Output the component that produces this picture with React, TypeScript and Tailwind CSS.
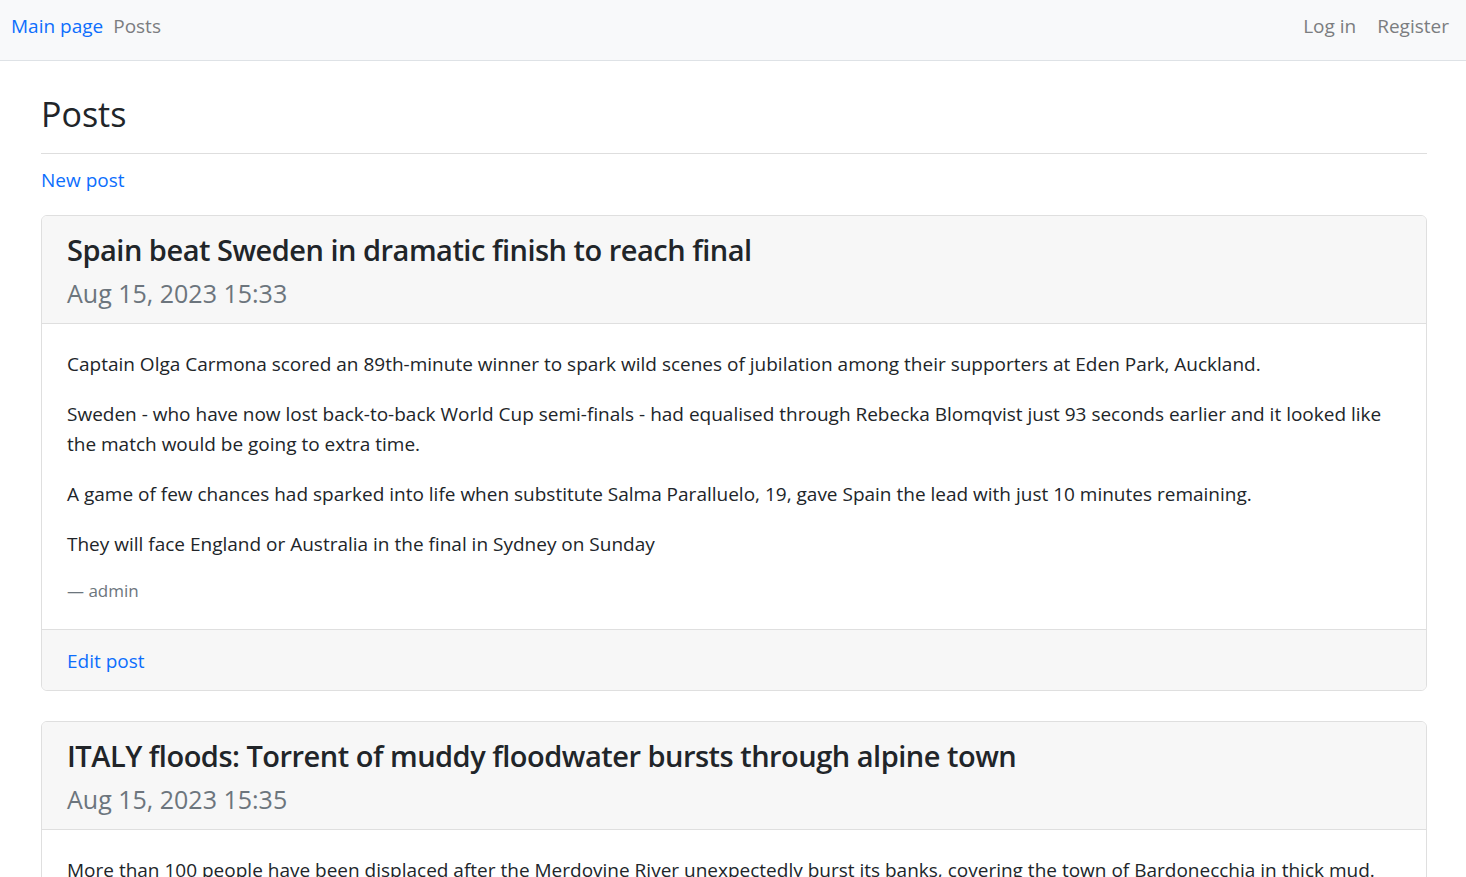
import React from 'react';

type Post = {
    title: string;
    date: string;
    paragraphs: string[];
    author: string;
};

const posts: Post[] = [
    {
        title: 'Spain beat Sweden in dramatic finish to reach final',
        date: 'Aug 15, 2023 15:33',
        paragraphs: [
            'Captain Olga Carmona scored an 89th-minute winner to spark wild scenes of jubilation among their supporters at Eden Park, Auckland.',
            'Sweden - who have now lost back-to-back World Cup semi-finals - had equalised through Rebecka Blomqvist just 93 seconds earlier and it looked like the match would be going to extra time.',
            'A game of few chances had sparked into life when substitute Salma Paralluelo, 19, gave Spain the lead with just 10 minutes remaining.',
            'They will face England or Australia in the final in Sydney on Sunday',
        ],
        author: 'admin',
    },
    {
        title: 'ITALY floods: Torrent of muddy floodwater bursts through alpine town',
        date: 'Aug 15, 2023 15:35',
        paragraphs: [
            'More than 100 people have been displaced after the Merdovine River unexpectedly burst its banks, covering the town of Bardonecchia in thick mud.',
        ],
        author: 'admin',
    },
];

function Navbar() {
    return (
        <nav className="h-[61px] bg-[#f8f9fa] border-b border-[#dee2e6] flex items-center justify-between px-[11px] pb-[8px] text-[19px]">
            <div className="flex items-center gap-[10px]">
                <a className="text-[#0d6efd]">Main page</a>
                <a className="text-[#7b7d80]">Posts</a>
            </div>
            <div className="flex items-center gap-[21px] pr-[6px] text-[#7b7d80]">
                <a>Log in</a>
                <a>Register</a>
            </div>
        </nav>
    );
}

function PostCard({ post }: { post: Post }) {
    return (
        <div className="border border-[#dfdfdf] rounded-[6px] mb-[30px] overflow-hidden">
            <div className="bg-[#f7f7f7] border-b border-[#dfdfdf] px-[25px] pt-[16px] pb-[15px]">
                <h3 className="text-[29px] leading-[36px] font-semibold tracking-[-0.5px] text-[#212529] mb-[10px]">{post.title}</h3>
                <h4 className="text-[25px] leading-[1.2] text-[#6c757d]">{post.date}</h4>
            </div>
            <div className="px-[25px] pt-[25px] pb-[26px]">
                {post.paragraphs.map((p, i) => (
                    <p key={i} className="mb-[20px]">{p}</p>
                ))}
                <p className="text-[17px] leading-[24px] text-[#6c757d]">— {post.author}</p>
            </div>
            <div className="bg-[#f7f7f7] border-t border-[#dfdfdf] px-[25px] pt-[16px] pb-[14px]">
                <a className="text-[#0d6efd]">Edit post</a>
            </div>
        </div>
    );
}

export default function App() {
    return (
        <div className="min-h-screen bg-white text-[#212529] text-[19px] leading-[30px]" style={{ fontFamily: '"Open Sans", "Noto Sans", sans-serif' }}>
            <Navbar />
            <main className="pl-[41px] pr-[39px] pt-[32px]">
                <h1 className="text-[34px] leading-[43px] font-medium">Posts</h1>
                <hr className="mt-[17px] mb-[11px] border-[#dedede]" />
                <a className="text-[#0d6efd]">New post</a>
                <div className="mt-[20px]">
                    {posts.map((post, i) => (
                        <PostCard key={i} post={post} />
                    ))}
                </div>
            </main>
        </div>
    );
}
